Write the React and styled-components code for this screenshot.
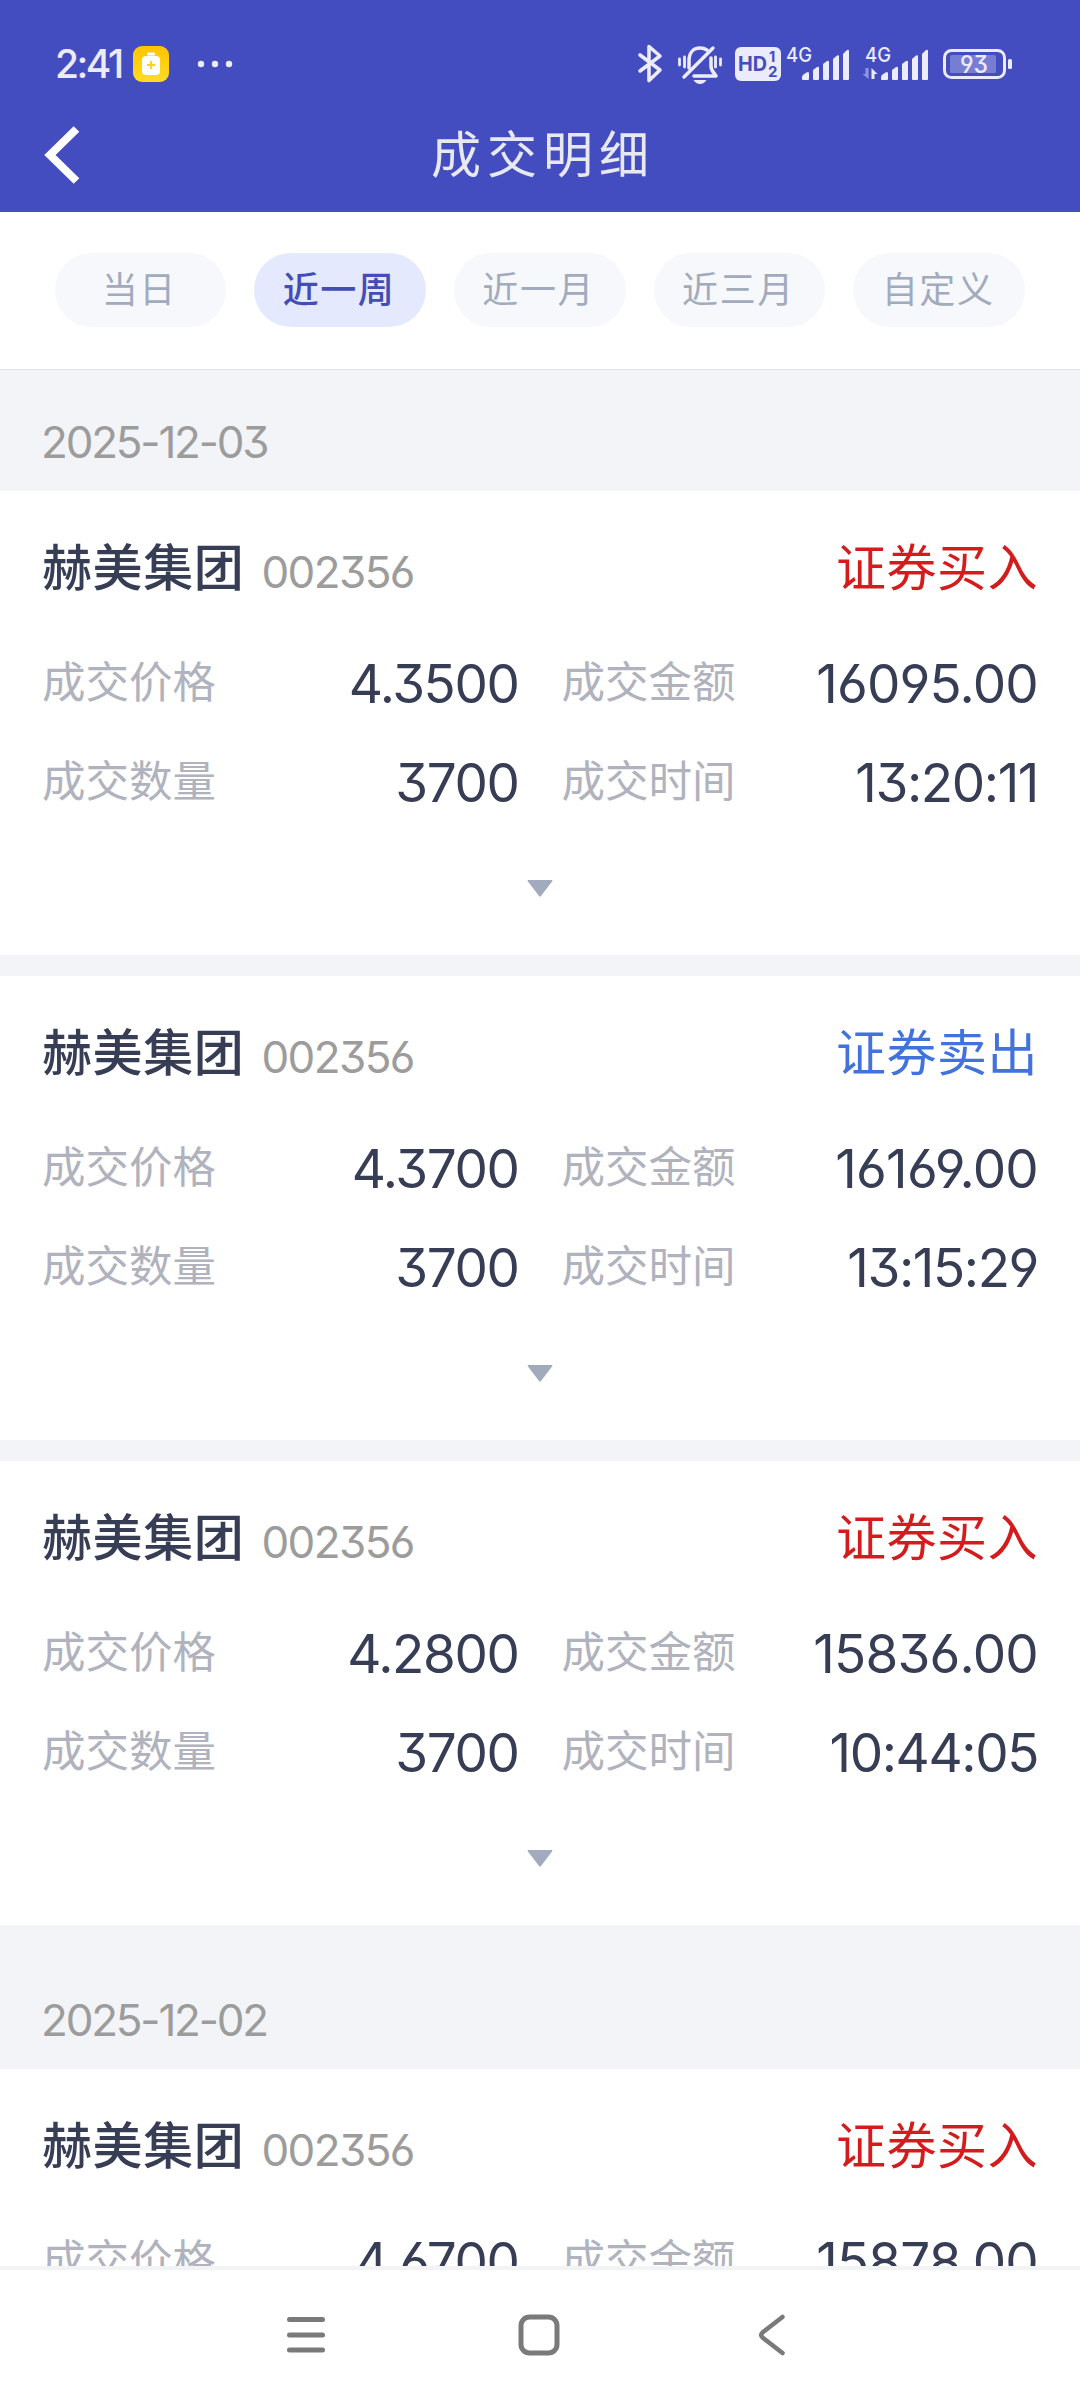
import React, { useState } from "react";
import styled, { createGlobalStyle } from "styled-components";

const GlobalStyle = createGlobalStyle`
  * {
    box-sizing: border-box;
  }

  body {
    margin: 0;
    background-color: #ffffff;
    font-family: Inter, "Noto Sans CJK SC", sans-serif;
    font-feature-settings: "cv03", "cv04", "cv09";
  }
`;

const Screen = styled.div`
  width: 1080px;
  height: 2400px;

  display: flex;
  flex-direction: column;

  overflow: hidden;
`;

const Header = styled.header`
  height: 212px;
  flex-shrink: 0;

  background-color: #444dbf;
`;

const StatusBar = styled.div`
  height: 127px;
  padding: 0 68px 0 55px;

  display: flex;
  align-items: center;
  justify-content: space-between;
`;

const StatusGroup = styled.div`
  display: flex;
  align-items: center;
`;

const Clock = styled.span`
  width: 78px;

  color: #ebebfc;
  font-size: 39px;
  font-weight: 500;
  letter-spacing: -2.5px;
  line-height: 46px;
  white-space: nowrap;
`;

const MoreDots = styled.svg`
  margin-left: 28px;
`;

const TitleBar = styled.div`
  height: 85px;
  padding: 0 42px;

  display: grid;
  grid-template-columns: 100px 1fr 100px;
  align-items: center;
`;

const BackButton = styled.button`
  height: 85px;
  padding: 0 0 31px;
  border: none;
  background: none;

  display: flex;
  align-items: center;

  cursor: pointer;
`;

const Title = styled.h1`
  margin: 0;
  padding: 0 0 30px 6px;

  color: #e8e8f0;
  font-size: 50px;
  font-weight: 400;
  letter-spacing: 6px;
  line-height: 56px;
  text-align: center;
`;

const Tabs = styled.nav`
  height: 158px;
  padding: 41px 55px 0 54.5px;
  border-bottom: 1px solid #e2e3e6;
  flex-shrink: 0;

  display: flex;
  gap: 28px;
`;

const Tab = styled.button`
  flex: 1;
  height: 74px;
  padding: 0 2px 0 0;
  border: none;
  border-radius: 37px;

  background-color: ${(props) => (props.$active ? "#e5e9fd" : "#f7f8fc")};
  color: ${(props) => (props.$active ? "#444db5" : "#a2abbe")};

  font-family: inherit;
  font-size: 36px;
  font-weight: ${(props) => (props.$active ? 500 : 400)};
  letter-spacing: 1.6px;
  line-height: 74px;

  cursor: pointer;
`;

const List = styled.main`
  flex: 1;
  min-height: 0;
  overflow: hidden;

  background-color: #f3f4f7;
`;

const DateLabel = styled.div`
  height: 121px;
  padding: 48px 41px 0;

  color: #9c9c9c;
  font-size: 44px;
  letter-spacing: -2.2px;
  line-height: 48px;
`;

const Card = styled.article`
  height: 464px;
  margin-bottom: 21px;
  padding: 37px 42px 0;

  background-color: #ffffff;
`;

const DayGroup = styled.section`
  & + & {
    padding-top: 2px;
  }
`;

const CardHead = styled.div`
  height: 80px;
  margin-bottom: 26px;

  display: flex;
  align-items: center;
`;

const StockName = styled.span`
  color: #383d56;
  font-size: 50px;
  font-weight: 500;
  letter-spacing: 0.6px;
  line-height: 80px;
`;

const StockCode = styled.span`
  margin-left: 17px;
  padding-top: 8px;

  color: #9c9c9c;
  font-size: 44px;
  letter-spacing: -1.6px;
  line-height: 70px;
`;

const TradeType = styled.span`
  margin-left: auto;

  color: ${(props) => (props.$side === "sell" ? "#4273dc" : "#d41c1c")};
  font-size: 50px;
  letter-spacing: 0.5px;
  line-height: 80px;
`;

const Fields = styled.div`
  display: grid;
  grid-template-columns: 1fr 1fr;
  grid-auto-rows: 99px;
  column-gap: 43px;
`;

const Field = styled.div`
  display: flex;
  align-items: center;
  justify-content: space-between;
`;

const FieldName = styled.span`
  padding-bottom: 3px;

  color: #b0b2bd;
  font-size: 43.5px;
  line-height: 60px;
`;

const FieldValue = styled.span`
  color: #383d56;
  font-size: 53px;
  letter-spacing: ${(props) => (props.$loose ? "-0.8px" : "-1.4px")};
  line-height: 60px;
`;

const Expand = styled.button`
  width: 100%;
  height: 113px;
  padding: 0;
  border: none;
  background: none;

  display: flex;
  align-items: center;
  justify-content: center;

  cursor: pointer;
`;

const NavBar = styled.footer`
  height: 134px;
  padding: 0 290px 0 282px;
  border-top: 4px solid #f2f3f5;
  flex-shrink: 0;

  display: flex;
  align-items: center;
  justify-content: space-between;
`;

const tabs = ["当日", "近一周", "近一月", "近三月", "自定义"];

const days = [
  {
    date: "2025-12-03",
    trades: [
      { side: "buy", price: "4.3500", amount: "16095.00", count: "3700", time: "13:20:11" },
      { side: "sell", price: "4.3700", amount: "16169.00", count: "3700", time: "13:15:29" },
      { side: "buy", price: "4.2800", amount: "15836.00", count: "3700", time: "10:44:05" },
    ],
  },
  {
    date: "2025-12-02",
    trades: [{ side: "buy", price: "4.6700", amount: "15878.00" }],
  },
];

const BatteryAppIcon = () => (
  <svg width="36" height="36" viewBox="0 0 36 36">
    <defs>
      <linearGradient id="appYellow" x1="0" y1="0" x2="0" y2="1">
        <stop offset="0" stopColor="#ffc400" />
        <stop offset="1" stopColor="#ffdc24" />
      </linearGradient>
    </defs>
    <rect width="36" height="36" rx="9" fill="url(#appYellow)" />
    <rect x="14" y="6.5" width="8" height="3" rx="1" fill="#fff" />
    <rect x="9" y="10" width="18" height="19" rx="4" fill="#fff" />
    <path d="M18 15v8M14 19h8" stroke="#ffd21a" strokeWidth="2" />
  </svg>
);

const Bars = ({ x }) => (
  <g transform={`translate(${x} 0)`} fill="#ebebfc">
    <path d="M0 39v-2.500q0-2 1.500-3l3-2q2.500-1.500 2.500 1V38q0 1-1 1H1q-1 0-1-1z" />
    <path d="M11 38V29l4-3q2-1 2 1v11q0 1-1 1h-4q-1 0-1-1z" />
    <path d="M21 38V23l4-3q2-1 2 1v17q0 1-1 1h-4q-1 0-1-1z" />
    <path d="M31 38V18l4-3.500q2-1 2 1V38q0 1-1 1h-4q-1 0-1-1z" />
    <path d="M41 38V13l4-4q2-1 2 1v28q0 1-1 1h-4q-1 0-1-1z" />
  </g>
);

// bluetooth, mute, HD, two sim signals and battery share one strip
const SystemIcons = () => (
  <svg width="376" height="46" viewBox="0 0 376 46" fill="none" fontFamily="Inter, sans-serif">
    <path
      d="M4 14l20 15-11 10.500V5.500L24 15 4 30"
      stroke="#ebebfc"
      strokeWidth="3.600"
      strokeLinecap="round"
      strokeLinejoin="round"
    />
    <g stroke="#ebebfc" strokeWidth="3.500" strokeLinecap="round">
      <path d="M53 27V20C53 12 57 7 64 7q4 0 7 2" />
      <path d="M75 17v8q0 4 3 7l2 3H58" strokeLinejoin="round" />
      <path d="M48 36L77 7" />
      <path d="M43.500 18v6M48.500 16v10M79.500 16v10M84.500 18v6" strokeWidth="2.800" />
    </g>
    <path d="M57.500 39h13q-2.500 4-6.500 4t-6.500-4z" fill="#ebebfc" />
    <rect x="99" y="6" width="46" height="34" rx="6" fill="#ebebfc" />
    <g fill="#444dbf" fontWeight="700">
      <text x="102" y="30" fontSize="20" textLength="29" lengthAdjust="spacingAndGlyphs">HD</text>
      <text x="133" y="21" fontSize="14.500">1</text>
      <text x="132" y="36" fontSize="15">2</text>
    </g>
    <g fill="#ebebfc" fontSize="20.500" fontWeight="500">
      <text x="150" y="21" textLength="26" lengthAdjust="spacingAndGlyphs">4G</text>
      <text x="229" y="21" textLength="26" lengthAdjust="spacingAndGlyphs">4G</text>
    </g>
    <Bars x={166} />
    <Bars x={245} />
    <path d="M232.500 27v11l-6-5h3v-6z" fill="#8f95de" />
    <path d="M235.500 38V27l6 6h-3v5z" fill="#ebebfc" />
    <rect x="308.500" y="9.500" width="60" height="27" rx="7" stroke="#ebebfc" strokeWidth="3" />
    <rect x="314" y="14" width="46" height="18" rx="1.500" fill="#767dd2" />
    <rect x="372" y="18" width="4" height="10" rx="1.500" fill="#ebebfc" />
    <text
      x="324"
      y="32"
      fill="#ebebfc"
      fontSize="24"
      fontWeight="500"
      textLength="28"
      lengthAdjust="spacingAndGlyphs"
    >
      93
    </text>
  </svg>
);

const Trade = ({ trade }) => (
  <Card>
    <CardHead>
      <StockName>赫美集团</StockName>
      <StockCode>002356</StockCode>
      <TradeType $side={trade.side}>
        {trade.side === "sell" ? "证券卖出" : "证券买入"}
      </TradeType>
    </CardHead>
    <Fields>
      <Field>
        <FieldName>成交价格</FieldName>
        <FieldValue>{trade.price}</FieldValue>
      </Field>
      <Field>
        <FieldName>成交金额</FieldName>
        <FieldValue $loose>{trade.amount}</FieldValue>
      </Field>
      {trade.count && (
        <Field>
          <FieldName>成交数量</FieldName>
          <FieldValue>{trade.count}</FieldValue>
        </Field>
      )}
      {trade.time && (
        <Field>
          <FieldName>成交时间</FieldName>
          <FieldValue>{trade.time}</FieldValue>
        </Field>
      )}
    </Fields>
    <Expand>
      <svg width="26" height="17" viewBox="0 0 26 17">
        <path d="M1.500 0h23q1.500 0 .7 1.200L14 16q-1 1-2 0L.8 1.200Q0 0 1.500 0z" fill="#a2abbe" />
      </svg>
    </Expand>
  </Card>
);

const App = () => {
  const [active, setActive] = useState("近一周");

  return (
    <Screen>
      <GlobalStyle />
      <Header>
        <StatusBar>
          <StatusGroup>
            <Clock>2:41</Clock>
            <BatteryAppIcon />
            <MoreDots width="36" height="8" viewBox="0 0 36 8" fill="#ebebfc">
              <circle cx="4" cy="4" r="3.200" />
              <circle cx="18" cy="4" r="3.200" />
              <circle cx="32" cy="4" r="3.200" />
            </MoreDots>
          </StatusGroup>
          <SystemIcons />
        </StatusBar>
        <TitleBar>
          <BackButton>
            <svg width="40" height="60" viewBox="0 0 40 60" fill="none">
              <path d="M34.500 4L8 30l26.500 26" stroke="#fff" strokeWidth="8" />
            </svg>
          </BackButton>
          <Title>成交明细</Title>
        </TitleBar>
      </Header>

      <Tabs>
        {tabs.map((tab) => (
          <Tab key={tab} $active={tab === active} onClick={() => setActive(tab)}>
            {tab}
          </Tab>
        ))}
      </Tabs>

      <List>
        {days.map((day) => (
          <DayGroup key={day.date}>
            <DateLabel>{day.date}</DateLabel>
            {day.trades.map((trade) => (
              <Trade key={trade.amount} trade={trade} />
            ))}
          </DayGroup>
        ))}
      </List>

      <NavBar>
        <svg width="48" height="48" viewBox="0 0 48 48">
          <path
            d="M7.500 8.500h33M7.500 24h33M7.500 39h33"
            stroke="#7a7a7a"
            strokeWidth="5"
            strokeLinecap="round"
          />
        </svg>
        <svg width="48" height="48" viewBox="0 0 48 48" fill="none">
          <rect x="6" y="6" width="36" height="36" rx="8.500" stroke="#7a7a7a" strokeWidth="5" />
        </svg>
        <svg width="42" height="48" viewBox="0 0 42 48" fill="none">
          <path
            d="M34.500 6L14.500 21.500q-2.500 2.500 0 5l20 15.500"
            stroke="#7a7a7a"
            strokeWidth="4.500"
            strokeLinecap="round"
          />
        </svg>
      </NavBar>
    </Screen>
  );
};

export default App;
